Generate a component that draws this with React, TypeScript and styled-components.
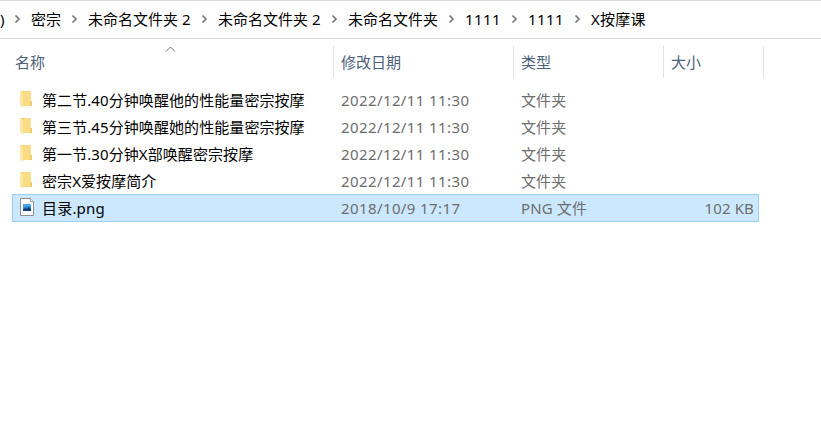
import React from "react";
import styled, { createGlobalStyle } from "styled-components";

const GlobalStyle = createGlobalStyle`
  body {
    margin: 0;
    background: #fff;
    font-family: "Noto Sans", "Noto Sans CJK SC", sans-serif;
    font-size: 15px;
    line-height: 20px;
    overflow: hidden;
  }
`;

const Window = styled.div`
  width: 821px;
  height: 443px;
  box-sizing: border-box;
  border-top: 1px solid #d9d9d9;
  background: #fff;
  overflow: hidden;
`;

const AddressBar = styled.nav`
  display: flex;
  align-items: center;
  height: 37px;
  border-bottom: 1px solid #d9d9d9;
  color: #000;
  white-space: pre;
`;

const Crumb = styled.span<{ $width: number; $spacing?: number }>`
  flex: none;
  width: ${(p) => p.$width}px;
  padding-bottom: 2px;
  letter-spacing: ${(p) => p.$spacing ?? 0}px;
`;

const Arrow = styled.svg`
  flex: none;
  width: 7px;
  height: 10px;
  margin: 0 10px 2px 0;
`;

const Header = styled.div`
  display: flex;
  position: relative;
  height: 32px;
  padding-top: 7px;
  color: #4c607a;
`;

const HeaderCell = styled.div<{ $width: number; $indent: number }>`
  box-sizing: border-box;
  width: ${(p) => p.$width}px;
  padding-left: ${(p) => p.$indent}px;
  border-right: 1px solid #e2e2e2;
  line-height: 33px;
`;

const SortMark = styled.svg`
  position: absolute;
  left: 165px;
  top: 7px;
  width: 11px;
  height: 7px;
`;

const Files = styled.div`
  margin: 8px 0 0 12px;
  width: 747px;
`;

const Row = styled.div<{ $selected?: boolean }>`
  display: flex;
  align-items: center;
  box-sizing: border-box;
  height: ${(p) => (p.$selected ? 28 : 27)}px;
  border: 1px solid ${(p) => (p.$selected ? "#99d1f5" : "transparent")};
  background: ${(p) => (p.$selected ? "#cce8ff" : "transparent")};
  padding-left: 6px;
  color: #6d6d6d;
  white-space: pre;
`;

const IconSlot = styled.span`
  display: flex;
  flex: none;
  width: 23px;
  svg {
    display: block;
    margin-bottom: 2px;
  }
`;

const Name = styled.span<{ $spacing: number }>`
  flex: none;
  width: 299px;
  color: #000;
  letter-spacing: ${(p) => p.$spacing}px;
`;

const DateCell = styled.span`
  flex: none;
  width: 180px;
  letter-spacing: 0.4px;
`;

const TypeCell = styled.span`
  flex: none;
  width: 150px;
  letter-spacing: 0.12px;
`;

const SizeCell = styled.span`
  flex: 1;
  padding-right: 4px;
  text-align: right;
  letter-spacing: 0.15px;
`;

const crumbs = [
  { text: "密宗", width: 40 },
  { text: "未命名文件夹 2", width: 113 },
  { text: "未命名文件夹 2", width: 113 },
  { text: "未命名文件夹", width: 100 },
  { text: "1111", width: 46, spacing: 0.4 },
  { text: "1111", width: 46, spacing: 0.4 },
  { text: "X按摩课", width: 80, spacing: 0.2 },
];

const files = [
  { name: "第二节.40分钟唤醒他的性能量密宗按摩", date: "2022/12/11 11:30", type: "文件夹", size: "" },
  { name: "第三节.45分钟唤醒她的性能量密宗按摩", date: "2022/12/11 11:30", type: "文件夹", size: "" },
  { name: "第一节.30分钟X部唤醒密宗按摩", date: "2022/12/11 11:30", type: "文件夹", size: "" },
  { name: "密宗X爱按摩简介", date: "2022/12/11 11:30", type: "文件夹", size: "" },
  { name: "目录.png", date: "2018/10/9 17:17", type: "PNG 文件", size: "102 KB" },
];

const FolderIcon = () => (
  <svg width="16" height="18" viewBox="0 0 16 18">
    <path d="M1.5 1H11.5V11H13V16H3V17L1.5 15.5Z" fill="#f3d071" />
    <path d="M5 1H11.5V16H5Z" fill="#f9dc83" />
    <path d="M11.5 11H13V16H11.5Z" fill="#efcb68" />
    <path d="M1.5 1L4.5 3V17.5L1.5 15.5Z" fill="#ffe7a0" />
  </svg>
);

const PictureIcon = () => (
  <svg width="16" height="18" viewBox="0 0 16 18">
    <path d="M1.5 .5H11.5L14.5 3.5V17.5H1.5Z" fill="#fff" stroke="#8b8f92" />
    <path d="M11.5 .5V3.5H14.5" fill="#f2f2f2" stroke="#a2a5a7" />
    <path d="M4 6H12V13H4Z" fill="#2387d8" />
    <path d="M4 6H12V9L9 8L4 9.5Z" fill="#4ba6e8" />
    <path d="M4 11.5L6 10L8 11L9.5 9L12 11V13H4Z" fill="#123d70" />
  </svg>
);

const Chevron = () => (
  <Arrow viewBox="0 0 7 10">
    <path d="M1.5 1.5L5 5L1.5 8.5" fill="none" stroke="#777" strokeWidth="1.7" />
  </Arrow>
);

export default function App() {
  return (
    <Window>
      <GlobalStyle />
      <AddressBar>
        <Crumb $width={14}>)</Crumb>
        {crumbs.map((c, i) => (
          <React.Fragment key={i}>
            <Chevron />
            <Crumb $width={c.width} $spacing={c.spacing}>{c.text}</Crumb>
          </React.Fragment>
        ))}
      </AddressBar>
      <Header>
        <HeaderCell $width={334} $indent={15}>名称</HeaderCell>
        <HeaderCell $width={180} $indent={7}>修改日期</HeaderCell>
        <HeaderCell $width={150} $indent={7}>类型</HeaderCell>
        <HeaderCell $width={100} $indent={7}>大小</HeaderCell>
        <SortMark viewBox="0 0 11 7">
          <path d="M1 5.5L5.5 1L10 5.5" fill="none" stroke="#6e6e6e" />
        </SortMark>
      </Header>
      <Files>
        {files.map((f) => {
          const picture = f.size !== "";
          return (
            <Row key={f.name} $selected={picture}>
              <IconSlot>{picture ? <PictureIcon /> : <FolderIcon />}</IconSlot>
              <Name $spacing={picture ? 0.2 : 0.08}>{f.name}</Name>
              <DateCell>{f.date}</DateCell>
              <TypeCell>{f.type}</TypeCell>
              <SizeCell>{f.size}</SizeCell>
            </Row>
          );
        })}
      </Files>
    </Window>
  );
}
